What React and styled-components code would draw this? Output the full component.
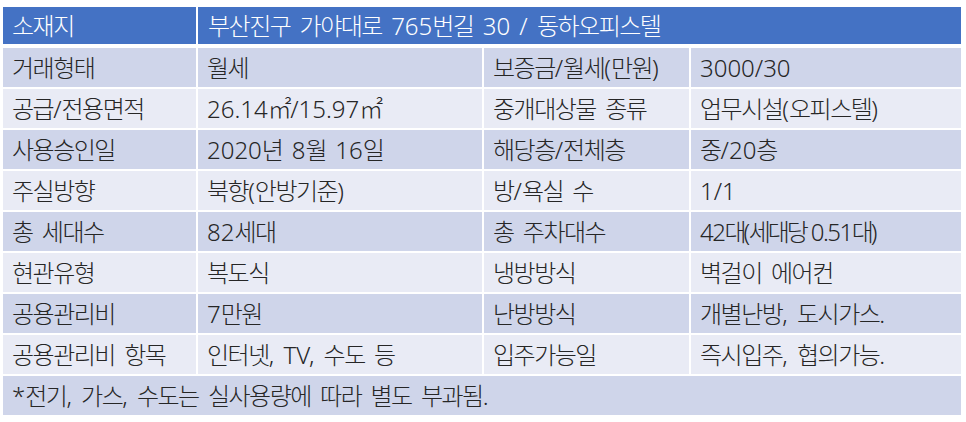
import React from "react";
import styled, { createGlobalStyle } from "styled-components";

const GlobalStyle = createGlobalStyle`
  html, body {
    margin: 0;
    padding: 0;
    background: #fff;
  }
  body {
    font-family: "Noto Sans", "Noto Sans CJK KR", sans-serif;
  }
`;

const rows = [
  ["거래형태", "월세", "보증금/월세(만원)", "3000/30"],
  ["공급/전용면적", "26.14㎡/15.97㎡", "중개대상물 종류", "업무시설(오피스텔)"],
  ["사용승인일", "2020년 8월 16일", "해당층/전체층", "중/20층"],
  ["주실방향", "북향(안방기준)", "방/욕실 수", "1/1"],
  ["총 세대수", "82세대", "총 주차대수", "42대(세대당 0.51대)"],
  ["현관유형", "복도식", "냉방방식", "벽걸이 에어컨"],
  ["공용관리비", "7만원", "난방방식", "개별난방, 도시가스."],
  ["공용관리비 항목", "인터넷, TV, 수도 등", "입주가능일", "즉시입주, 협의가능."],
];

// hangul runs get tighter spacing so they sit as narrow as the original font
function Label({ text }) {
  return (
    <Text>
      {text
        .split(/([가-힣㎡]+)/)
        .map((part, i) =>
          /[가-힣㎡]/.test(part) ? <Hangul key={i}>{part}</Hangul> : part
        )}
    </Text>
  );
}

export default function App() {
  return (
    <>
      <GlobalStyle />
      <Page>
        <Table>
          <Cell $kind="head">
            <Label text="소재지" />
          </Cell>
          <Cell $kind="head" $span={3}>
            <Label text="부산진구 가야대로 765번길 30 / 동하오피스텔" />
          </Cell>
          {rows.map((row, i) =>
            row.map((text, j) => (
              <Cell
                key={i + "-" + j}
                $kind={i % 2 === 0 ? "dark" : "light"}
                $tight={text.includes("세대당")}
              >
                <Label text={text} />
              </Cell>
            ))
          )}
          <Cell $kind="dark" $span={4}>
            <Label text="*전기, 가스, 수도는 실사용량에 따라 별도 부과됨." />
          </Cell>
        </Table>
      </Page>
    </>
  );
}

const colors = {
  head: "#4472C4",
  dark: "#CFD5EA",
  light: "#E9EBF5",
};

const Page = styled.div`
  padding: 7px 0 0 3px;
`;

const Table = styled.div`
  display: grid;
  grid-template-columns: 193px 284px 205px 270px;
  grid-auto-rows: 39px;
  gap: 2px;
  width: 958px;
  background: #fff;

  & > :nth-child(1),
  & > :nth-child(2) {
    margin-bottom: 2px;
  }
`;

const Text = styled.span`
  white-space: pre;
`;

const Hangul = styled.span`
  font-family: "Noto Sans CJK KR", sans-serif;
  letter-spacing: -1.5px;
`;

const Cell = styled.div`
  grid-column: span ${(p) => p.$span || 1};
  display: flex;
  align-items: center;
  padding-left: ${(p) => (p.$span === 3 ? 10 : 9)}px;
  background: ${(p) => colors[p.$kind]};
  color: ${(p) => (p.$kind === "head" ? "#fff" : "#262626")};
  font-size: 24px;
  font-weight: 300;
  letter-spacing: ${(p) => (p.$tight ? "-1.5px" : "0")};
  word-spacing: ${(p) => (p.$tight ? "0" : "3px")};
  overflow: hidden;
  line-height: 1;

  ${Hangul} {
    letter-spacing: ${(p) => (p.$tight ? "-3px" : "-1.5px")};
  }
`;
